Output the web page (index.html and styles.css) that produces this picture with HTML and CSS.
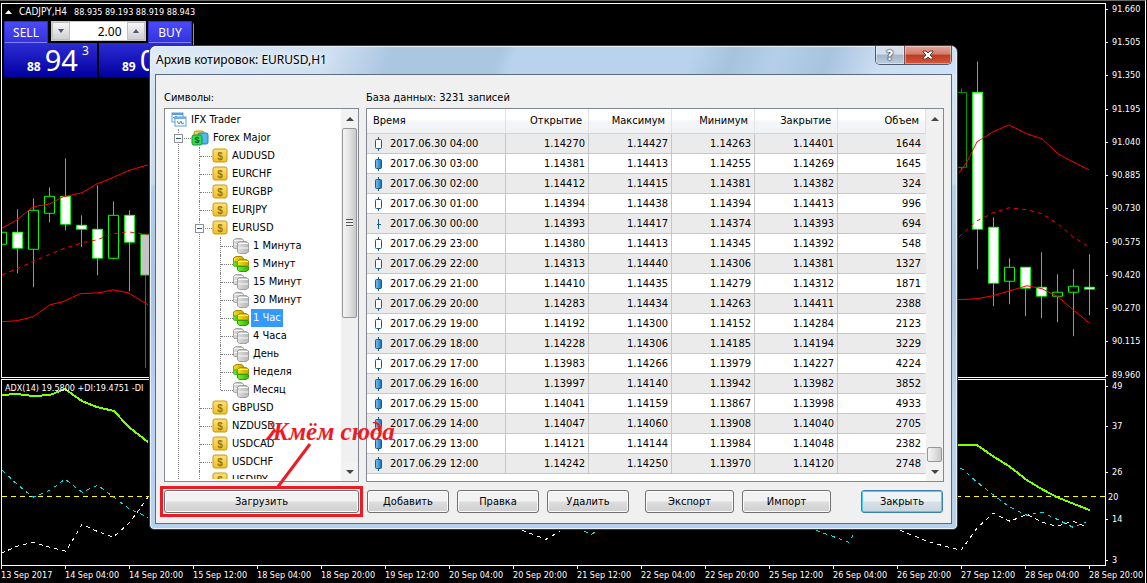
FILE: index.html
```html
<!DOCTYPE html>
<html lang="ru">
<head>
<meta charset="UTF-8">
<title>CADJPY,H4</title>
<link rel="stylesheet" href="styles.css">
</head>

<body>
<!--иконки-->
<svg class="sprite" width="0" height="0" aria-hidden="true">
  <defs>
    <linearGradient id="gGold" x1="0" y1="0" x2="0" y2="1"><stop offset="0" stop-color="#fbe27c"/><stop offset="1" stop-color="#f4bc22"/></linearGradient>
    <linearGradient id="gBlue" x1="0" y1="0" x2="1" y2="0"><stop offset="0" stop-color="#7cc4f4"/><stop offset="1" stop-color="#1470b4"/></linearGradient>
    <linearGradient id="gGray" x1="0" y1="0" x2="1" y2="0"><stop offset="0" stop-color="#dedede"/><stop offset="1" stop-color="#b8b8b8"/></linearGradient>
    <linearGradient id="gYell" x1="0" y1="0" x2="1" y2="0"><stop offset="0" stop-color="#f4e020"/><stop offset="1" stop-color="#c8a400"/></linearGradient>
    <linearGradient id="gGreen" x1="0" y1="0" x2="1" y2="0"><stop offset="0" stop-color="#70f430"/><stop offset="1" stop-color="#38b400"/></linearGradient>
  </defs>
  <symbol id="i-root" viewBox="0 0 16 16">
    <rect x="1" y="1" width="11" height="9" fill="#fff" stroke="#5b9fd8"/><path d="M1 2h11" stroke="#5b9fd8" stroke-width="2"/>
    <path d="M2 6l1-1 1 2 1-3 1 2" fill="none" stroke="#4a86c8"/>
    <rect x="4" y="5" width="11" height="9" fill="#fff" stroke="#5b9fd8"/><path d="M4 6h11" stroke="#6cb0e8" stroke-width="2"/>
    <path d="M6 9l2 3 2-3 1 3 2-1" fill="none" stroke="#4a86c8"/>
  </symbol>
  <symbol id="i-group" viewBox="0 0 18 16">
    <rect x="3" y="1" width="10" height="8" rx="2" fill="#f3cf45" stroke="#b8960c"/>
    <rect x="7" y="3" width="10" height="11" rx="2" fill="#52b8f0" stroke="#1c80b8"/>
    <rect x="1" y="5" width="10" height="10" rx="2" fill="#30dc58" stroke="#0c9a30"/>
    <text x="6" y="13" class="coin coin-green">$</text>
  </symbol>
  <symbol id="i-coin" viewBox="0 0 16 16">
    <rect x="1" y="1" width="14" height="13" rx="2" fill="url(#gGold)" stroke="#c8980c"/>
    <text x="8" y="12" class="coin">$</text>
  </symbol>
  <symbol id="i-base" viewBox="0 0 16 16">
    <path d="M.5 2L3 .5h5.500L10.500 2v8.500H2L.5 10z" fill="url(#gGray)" stroke="#a6a6a6"/><path d="M1 2.500h9M1 6.500h4" stroke="#f4f4f4"/>
    <path d="M4.500 5L7 3.500h6L15.500 5v9L13 15.500H6.500L4.500 14z" fill="url(#gGray)" stroke="#a0a0a0"/><path d="M5 5.500h10M5 10h10" stroke="#fafafa"/>
  </symbol>
  <symbol id="i-base-on" viewBox="0 0 16 16">
    <path d="M.5 2L3 .5h5.500L10.500 2v4H.5z" fill="url(#gYell)" stroke="#a48c00"/><path d="M.5 6h5v4.500H2L.5 10z" fill="url(#gGreen)" stroke="#58c030"/>
    <path d="M4.500 5L7 3.500h6L15.500 5v5h-11z" fill="url(#gYell)" stroke="#a48c00"/><path d="M4.500 10.500h11V14L13 15.500H6.500L4.500 14z" fill="url(#gGreen)" stroke="#349800"/>
    <path d="M5 5.500h10" stroke="#fff08a"/>
  </symbol>
  <symbol id="i-up" viewBox="0 0 8 14"><path d="M4.500 0v14" stroke="#1a5a86"/><rect x="1.500" y="2.500" width="6" height="9" rx="1" fill="#fff" stroke="#1a5a86"/></symbol>
  <symbol id="i-down" viewBox="0 0 8 14"><path d="M4.500 0v14" stroke="#1a5a86"/><rect x="1.500" y="2.500" width="6" height="9" rx="1" fill="url(#gBlue)" stroke="#1a5a86"/></symbol>
  <symbol id="i-flat" viewBox="0 0 8 14"><path d="M4.500 2v10M3 7.500h4" stroke="#1a5a86"/></symbol>
</svg>

<div class="terminal">
  <!--график цены-->
  <div class="pane pane-price">
    <svg class="plot" viewBox="2 4 1103 373" preserveAspectRatio="none" aria-hidden="true">
      <g transform="translate(.5 .5)" shape-rendering="crispEdges">
        <path class="wick" d="M1 213V261M17 209V273M33 198V287M49 187V222M65 158V230M81 215V247M97 185V275M113 201V259M129 210V291M193 23V60M977 61V269M993 217V306M1009 258V304M1025 267V316M1041 252V318M1057 274V322M1073 269V336M1089 254V315"/>
        <path class="wick dim" d="M145 234V368M961 88V170"/>
        <path class="bear" d="M12 232h10v16h-10zM60 196h10v28h-10zM76 225h10v4h-10zM92 229h10v29h-10zM124 215h10v27h-10zM972 92h10v137h-10zM988 227h10v56h-10zM1020 267h10v21h-10zM1036 287h10v9h-10zM1084 287h10v2h-10z"/>
        <path class="bear dim" d="M140 234h10v41h-10z"/>
        <path class="bull" d="M-4 232h10v12h-10zM28 210h10v39h-10zM44 196h10v17h-10zM108 215h10v43h-10zM1004 267h10v14h-10zM1052 292h10v4h-10zM1068 286h10v6h-10z"/>
        <path class="bull dim" d="M956 92h10v75h-10z"/>
      </g>
      <path class="band" d="M1 229L17 220L33 207L50 204L63 197L82 193L97 184L110 179L128 171L148 165M959 173L967 162L977 142L993 132L1009 125L1027 134L1042 139L1058 154L1073 162L1089 170"/>
      <path class="band" d="M1 322L17 321L33 317L50 305L63 302L80 294L100 293L113 290L128 293L148 305M958 300L977 299L993 296L1010 291L1027 286L1042 289L1058 297L1073 310L1089 323"/>
      <path class="band mid" d="M2 275L17 269L37 260L63 249L82 243L97 240L113 234L128 232L148 235M959 237L977 221L993 213L1009 208L1027 210L1042 214L1058 224L1073 237L1089 247"/>
    </svg>
    <p class="pane-title"><svg class="tri" viewBox="0 0 7 4" aria-hidden="true"><path d="M0 4L3.500 0L7 4z" fill="#fff"/></svg><span class="pair">CADJPY,H4</span><span>88.935 89.193 88.919 88.943</span></p>
    <div class="oneclick">
      <div class="oneclick-top">
        <button class="side" type="button">SELL</button>
        <div class="lots">
          <button type="button" aria-label="Меньше"><svg viewBox="0 0 6 4"><path d="M0 0h6L3 4z" fill="#46587c"/></svg></button>
          <input type="text" value="2.00" aria-label="Объем">
          <button type="button" aria-label="Больше"><svg viewBox="0 0 6 4"><path d="M0 4h6L3 0z" fill="#46587c"/></svg></button>
        </div>
        <button class="side" type="button">BUY</button>
      </div>
      <div class="quotes">
        <div class="quote"><b>88</b><strong>94</strong><sup>3</sup></div>
        <div class="quote"><b>89</b><strong>0</strong></div>
      </div>
    </div>
  </div>
  <ul class="scale scale-price">
    <li>91.660</li><li>91.505</li><li>91.350</li><li>91.195</li><li>91.040</li><li>90.885</li><li>90.730</li><li>90.575</li><li>90.420</li><li>90.270</li><li>90.115</li><li>89.960</li>
  </ul>

  <!--индикатор ADX-->
  <div class="pane pane-adx">
    <svg class="plot" viewBox="2 380 1103 185" preserveAspectRatio="none" aria-hidden="true">
      <path class="level" d="M2 496.500H1105"/>
      <path class="di plus" d="M2 470L17 484L33 497L50 490L65 479L82 492L98 485L115 498L130 509L148 517M584 531L592 534L597 530M816 530L849 542L855 531M960 468L964 470L977 482L995 496L1010 507L1027 515L1042 512L1057 519L1073 527L1086 522"/>
      <path class="di minus" d="M1 553L17 546L33 542L50 547L66 551L82 524L97 531L113 537L130 522L148 497M522 530L546 539L560 531M900 530L930 542L961 550L977 528L993 513L1010 521L1027 514L1042 522L1057 526L1073 521L1087 527"/>
      <path class="adx" d="M1 395L17 394L33 396L50 395L65 389L82 401L97 407L114 411L129 427L148 442M958 445L977 445L993 456L1009 466L1027 480L1042 489L1057 497L1072 503L1090 510"/>
    </svg>
    <p class="pane-title">ADX(14) 19.5800 +DI:19.4751 -DI</p>
  </div>
  <ul class="scale scale-adx">
    <li>49</li><li>37</li><li>26</li><li class="on-level">20</li><li>14</li><li>3</li>
  </ul>

  <ul class="times">
    <li>13 Sep 2017</li><li>14 Sep 04:00</li><li>14 Sep 20:00</li><li>15 Sep 12:00</li><li>18 Sep 04:00</li><li>18 Sep 20:00</li><li>19 Sep 12:00</li><li>20 Sep 04:00</li><li>20 Sep 20:00</li><li>21 Sep 12:00</li><li>22 Sep 04:00</li><li>22 Sep 20:00</li><li>25 Sep 12:00</li><li>26 Sep 04:00</li><li>26 Sep 20:00</li><li>27 Sep 12:00</li><li>28 Sep 04:00</li><li>28 Sep 20:00</li>
  </ul>
</div>

<!--окно архива-->
<div class="dialog" role="dialog" aria-labelledby="dlgTitle">
  <div class="titlebar">
    <h1 id="dlgTitle">Архив котировок: EURUSD,H1</h1>
    <div class="winbtns">
      <button class="help" type="button" aria-label="Справка">?</button>
      <button class="close" type="button" aria-label="Закрыть окно"><svg viewBox="0 0 12 10"><path d="M1 1h3l2 2 2-2h3v1L8 5l3 3v1H8L6 7 4 9H1V8l3-3-3-3z" fill="#fff" stroke="#5c3a3a"/></svg></button>
    </div>
  </div>
  <div class="content">
    <div class="cols">
      <div class="col-tree">
        <h2>Символы:</h2>
        <div class="box">
          <div class="tree">
            <div class="row root"><svg class="ico"><use href="#i-root"/></svg><span>IFX Trader</span></div>
            <ul>
              <li><div class="row"><i class="exp"></i><svg class="ico wide"><use href="#i-group"/></svg><span>Forex Major</span></div>
                <ul>
                  <li><div class="row"><svg class="ico"><use href="#i-coin"/></svg><span>AUDUSD</span></div></li>
                  <li><div class="row"><svg class="ico"><use href="#i-coin"/></svg><span>EURCHF</span></div></li>
                  <li><div class="row"><svg class="ico"><use href="#i-coin"/></svg><span>EURGBP</span></div></li>
                  <li><div class="row"><svg class="ico"><use href="#i-coin"/></svg><span>EURJPY</span></div></li>
                  <li><div class="row"><i class="exp"></i><svg class="ico"><use href="#i-coin"/></svg><span>EURUSD</span></div>
                    <ul>
                      <li><div class="row"><svg class="ico"><use href="#i-base"/></svg><span>1 Минута</span></div></li>
                      <li><div class="row"><svg class="ico"><use href="#i-base-on"/></svg><span>5 Минут</span></div></li>
                      <li><div class="row"><svg class="ico"><use href="#i-base"/></svg><span>15 Минут</span></div></li>
                      <li><div class="row"><svg class="ico"><use href="#i-base"/></svg><span>30 Минут</span></div></li>
                      <li><div class="row"><svg class="ico"><use href="#i-base-on"/></svg><span class="sel">1 Час</span></div></li>
                      <li><div class="row"><svg class="ico"><use href="#i-base"/></svg><span>4 Часа</span></div></li>
                      <li><div class="row"><svg class="ico"><use href="#i-base"/></svg><span>День</span></div></li>
                      <li><div class="row"><svg class="ico"><use href="#i-base-on"/></svg><span>Неделя</span></div></li>
                      <li class="last"><div class="row"><svg class="ico"><use href="#i-base"/></svg><span>Месяц</span></div></li>
                    </ul>
                  </li>
                  <li><div class="row"><svg class="ico"><use href="#i-coin"/></svg><span>GBPUSD</span></div></li>
                  <li><div class="row"><svg class="ico"><use href="#i-coin"/></svg><span>NZDUSD</span></div></li>
                  <li><div class="row"><svg class="ico"><use href="#i-coin"/></svg><span>USDCAD</span></div></li>
                  <li><div class="row"><svg class="ico"><use href="#i-coin"/></svg><span>USDCHF</span></div></li>
                  <li><div class="row"><svg class="ico"><use href="#i-coin"/></svg><span>USDJPY</span></div></li>
                </ul>
              </li>
            </ul>
          </div>
          <div class="scroll scroll-tree">
            <button type="button" aria-label="Вверх"><svg viewBox="0 0 8 4"><path d="M0 4L4 0L8 4z"/></svg></button>
            <div class="thumb"></div>
            <button class="dn" type="button" aria-label="Вниз"><svg viewBox="0 0 8 4"><path d="M0 0L4 4L8 0z"/></svg></button>
          </div>
        </div>
        <button class="btn" type="button">Загрузить</button>
      </div>

      <div class="col-data">
        <h2>База данных: 3231 записей</h2>
        <div class="box">
          <div class="data">
            <table>
              <thead>
                <tr><th class="time">Время</th><th>Открытие</th><th>Максимум</th><th>Минимум</th><th>Закрытие</th><th class="vol">Объем</th></tr>
              </thead>
              <tbody>
                <tr><td><svg class="bar"><use href="#i-up"/></svg>2017.06.30 04:00</td><td>1.14270</td><td>1.14427</td><td>1.14263</td><td>1.14401</td><td>1644</td></tr>
                <tr><td><svg class="bar"><use href="#i-down"/></svg>2017.06.30 03:00</td><td>1.14381</td><td>1.14413</td><td>1.14255</td><td>1.14269</td><td>1645</td></tr>
                <tr><td><svg class="bar"><use href="#i-down"/></svg>2017.06.30 02:00</td><td>1.14412</td><td>1.14415</td><td>1.14381</td><td>1.14382</td><td>324</td></tr>
                <tr><td><svg class="bar"><use href="#i-up"/></svg>2017.06.30 01:00</td><td>1.14394</td><td>1.14438</td><td>1.14394</td><td>1.14413</td><td>996</td></tr>
                <tr><td><svg class="bar"><use href="#i-flat"/></svg>2017.06.30 00:00</td><td>1.14393</td><td>1.14417</td><td>1.14374</td><td>1.14393</td><td>694</td></tr>
                <tr><td><svg class="bar"><use href="#i-up"/></svg>2017.06.29 23:00</td><td>1.14380</td><td>1.14413</td><td>1.14345</td><td>1.14392</td><td>548</td></tr>
                <tr><td><svg class="bar"><use href="#i-up"/></svg>2017.06.29 22:00</td><td>1.14313</td><td>1.14440</td><td>1.14306</td><td>1.14381</td><td>1327</td></tr>
                <tr><td><svg class="bar"><use href="#i-down"/></svg>2017.06.29 21:00</td><td>1.14410</td><td>1.14435</td><td>1.14279</td><td>1.14312</td><td>1871</td></tr>
                <tr><td><svg class="bar"><use href="#i-up"/></svg>2017.06.29 20:00</td><td>1.14283</td><td>1.14434</td><td>1.14263</td><td>1.14411</td><td>2388</td></tr>
                <tr><td><svg class="bar"><use href="#i-up"/></svg>2017.06.29 19:00</td><td>1.14192</td><td>1.14300</td><td>1.14152</td><td>1.14284</td><td>2123</td></tr>
                <tr><td><svg class="bar"><use href="#i-down"/></svg>2017.06.29 18:00</td><td>1.14228</td><td>1.14306</td><td>1.14185</td><td>1.14194</td><td>3229</td></tr>
                <tr><td><svg class="bar"><use href="#i-up"/></svg>2017.06.29 17:00</td><td>1.13983</td><td>1.14266</td><td>1.13979</td><td>1.14227</td><td>4224</td></tr>
                <tr><td><svg class="bar"><use href="#i-down"/></svg>2017.06.29 16:00</td><td>1.13997</td><td>1.14140</td><td>1.13942</td><td>1.13982</td><td>3852</td></tr>
                <tr><td><svg class="bar"><use href="#i-down"/></svg>2017.06.29 15:00</td><td>1.14041</td><td>1.14159</td><td>1.13867</td><td>1.13998</td><td>4933</td></tr>
                <tr><td><svg class="bar"><use href="#i-down"/></svg>2017.06.29 14:00</td><td>1.14047</td><td>1.14060</td><td>1.13908</td><td>1.14040</td><td>2705</td></tr>
                <tr><td><svg class="bar"><use href="#i-down"/></svg>2017.06.29 13:00</td><td>1.14121</td><td>1.14144</td><td>1.13984</td><td>1.14048</td><td>2382</td></tr>
                <tr><td><svg class="bar"><use href="#i-down"/></svg>2017.06.29 12:00</td><td>1.14242</td><td>1.14250</td><td>1.13970</td><td>1.14120</td><td>2748</td></tr>
              </tbody>
            </table>
          </div>
          <div class="scroll scroll-data">
            <button type="button" aria-label="Вверх"><svg viewBox="0 0 8 4"><path d="M0 4L4 0L8 4z"/></svg></button>
            <div class="thumb"></div>
            <button class="dn" type="button" aria-label="Вниз"><svg viewBox="0 0 8 4"><path d="M0 0L4 4L8 0z"/></svg></button>
          </div>
        </div>
        <div class="actions">
          <button class="btn" type="button">Добавить</button>
          <button class="btn" type="button">Правка</button>
          <button class="btn" type="button">Удалить</button>
          <button class="btn long first" type="button">Экспорт</button>
          <button class="btn long" type="button">Импорт</button>
          <button class="btn default" type="button">Закрыть</button>
        </div>
      </div>
    </div>
  </div>

  <!--подсказка, какую кнопку нажать-->
  <svg class="mark" viewBox="0 0 204 76" aria-hidden="true"><rect x="1.500" y="45.500" width="200" height="28" fill="none" stroke="#ed1c24" stroke-width="3"/><path d="M150 2L117 46" stroke="#ed1c24" stroke-width="3"/></svg>
  <p class="mark-text">Жмём сюда</p>
</div>
</body>
</html>
```
FILE: styles.css
```css
html,body{ height:100%; margin:0; padding:0;}
body{ background:#000; overflow:hidden; font:11px/14px "DejaVu Sans Condensed","DejaVu Sans",sans-serif; color:#000;}
ul,p,h1,h2{ margin:0; padding:0; list-style:none; font-size:inherit; font-weight:normal;}
button,input{ margin:0; padding:0; font:inherit; box-sizing:border-box;}
button{ cursor:default;}
.sprite{ position:absolute;}

/* терминал */
.terminal{ box-sizing:border-box; height:100vh; margin-right:1px; border-top:1px solid #6a6a64; padding:2px 0 0 1px; display:grid; grid-template-columns:minmax(0,1fr) 39px; grid-template-rows:375fr 187fr 17px; border-right:1px solid #fff; color:#fff; font-size:9px; line-height:12px;}
.pane{ position:relative; border:1px solid #fff; overflow:hidden;}
.pane-price{ margin-bottom:1px;}
.plot{ display:block; position:absolute; top:0; left:0; width:100%; height:100%; shape-rendering:crispEdges;}
.pane-title{ position:relative; display:flex; gap:7px; padding:2px 3px; white-space:pre;}
.pair{ font-size:10px;}
.tri{ width:7px; height:4px; align-self:center;}
.wick{ stroke:#0f0; fill:none;}
.bear{ stroke:#0f0; fill:#fff;}
.bull{ stroke:#0f0; fill:#000;}
.wick.dim,.bull.dim{ stroke:#009c00;}
.bear.dim{ stroke:#00a800; fill:#c4c4c4;}
.band{ stroke:#f00; fill:none;}
.mid{ stroke-dasharray:4 4;}
.level{ stroke:#ff0; stroke-dasharray:5 4;}
.di{ fill:none; stroke-dasharray:4 4;}
.plus{ stroke:#00e5e5;}
.minus{ stroke:#fff;}
.adx{ fill:none; stroke:#7fff00; stroke-width:2;}

.scale li{ position:relative; padding-left:6px; line-height:12px;}
.scale li:before{ content:""; position:absolute; left:0; top:6px; width:2px; height:1px; background:#fff;}
.scale-price{ display:flex; flex-direction:column; justify-content:space-between; margin-bottom:-2px;}
.scale-adx{ display:grid; grid-template-rows:13fr 40fr 46fr 24fr 22fr 41fr; align-items:end;}
.scale-adx .on-level{ padding-left:2px;}
.scale-adx .on-level:before{ display:none;}
.times{ grid-column:1 / 3; display:flex; overflow:hidden;}
.times li{ flex:0 0 64px; position:relative; padding-top:3px; white-space:nowrap;}
.times li:before{ content:""; position:absolute; left:0; top:0; width:1px; height:3px; background:#fff;}

/* торговля в один клик */
.oneclick{ position:absolute; left:2px; top:17px; width:188px; font-family:"Noto Sans",sans-serif;}
.oneclick-top{ display:flex; justify-content:space-between;}
.side{ width:44px; height:22px; border:1px solid #2c2cd0; border-bottom:0; background:linear-gradient(#4a4af8,#3232dc); color:#fff; font-size:12px; line-height:18px; box-shadow:inset 0 -1px #8080ff;}
.lots{ display:flex; width:95px; height:20px; box-sizing:border-box; border:1px solid #c8c8c8; background:#fff;}
.lots button{ width:18px; border:1px solid #c0c0c0; background:linear-gradient(#f6f6f6,#d0d0d0);}
.lots svg{ display:block; width:6px; height:4px; margin:0 auto;}
.lots input{ flex:1; min-width:0; border:0; padding-right:5px; text-align:right; font-size:12px;}
.quotes{ display:flex; gap:2px;}
.quote{ box-sizing:border-box; width:93px; height:34px; padding-left:23px; display:flex; align-items:flex-end; gap:4px; background:linear-gradient(#2c2cd4,#0000a0); overflow:hidden;}
.quote b{ font-size:12px; line-height:20px;}
.quote strong{ font-size:29px; line-height:34px; font-weight:normal;}
.quote sup{ font-size:12px; line-height:16px; align-self:flex-start;}

/* окно */
.dialog{ position:absolute; left:149px; top:45px; width:809px; box-sizing:border-box; border:1px solid #2e3b4a; border-radius:7px 7px 5px 5px; padding:0 5px 5px; background:linear-gradient(#dce9f6,#c6daee 138px,#b2cfec 140px,#a8c4e2 240px,#b9d4f0 360px,#b6d1ed); box-shadow:inset 0 0 0 1px #e6f1fb;}
.titlebar{ display:flex; justify-content:space-between; height:28px; margin:0 -4px; padding:0 4px 0 5px; background:linear-gradient(110deg,#dde9f5 0,#cfe0f1 170px,#abc6e1 230px,#abc6e1 330px,#b9d3ed 345px,#b9d3ed 510px,#a6c2dd 550px,#b5cfe9 590px,#a8c3de 640px,#cbdef2 690px,#cfe1f4); border-radius:6px 6px 0 0; box-shadow:inset 0 1px #e6f1fb;}
.titlebar h1{ font:12px/28px "Noto Sans","DejaVu Sans",sans-serif; text-shadow:0 0 6px #fff,0 0 10px #fff;}
.winbtns{ display:flex; height:18px; border:1px solid #4c5a6c; border-top:0; border-radius:0 0 5px 5px; overflow:hidden;}
.winbtns button{ border:0; box-shadow:inset 0 0 0 1px rgba(255,255,255,.4);}
.help{ width:28px; background:linear-gradient(#d4dfeb 45%,#a4b6ca 50%,#bccddf); color:#fff; font-size:14px; font-weight:bold; text-shadow:0 0 1px #222c44,0 0 1px #222c44,0 0 2px #222c44;}
.winbtns .close{ width:47px; border-left:1px solid #7c4c4c; background:linear-gradient(#e4a294 0,#d08070 45%,#c03a20 50%,#d4583c);}
.close svg{ display:block; width:12px; height:10px; margin:0 auto;}
.content{ border:1px solid #5c6c80; background:#f0f0f0; padding:16px 7px 10px 8px;}
.cols{ display:flex; gap:7px;}
.col-tree{ width:195px;}
.col-data{ flex:1; min-width:0;}
.col-data h2,.col-tree h2{ margin-bottom:3px;}
.box{ display:flex; box-sizing:border-box; height:374px; border:1px solid #828790; background:#fff; margin-bottom:8px;}

/* дерево символов */
.tree{ flex:1; overflow:hidden; padding:2px 0 0; height:370px; box-sizing:border-box;}
.tree .row{ position:relative; display:flex; align-items:center; height:18px; white-space:nowrap;}
.tree .root{ padding-left:6px;}
.tree ul{ margin-left:13px;}
.tree ul ul{ margin-left:20px;}
.tree li{ border-left:1px dotted #808080;}
.tree li .row:before{ content:""; width:12px; border-top:1px dotted #808080;}
.tree .last{ border-left-color:transparent;}
.tree .last .row:after{ content:""; position:absolute; left:-1px; top:0; height:9px; border-left:1px dotted #808080;}
.row span{ margin-left:2px; padding:0 2px; line-height:18px;}
.row .sel{ background:#39f; color:#fff;}
.ico{ width:16px; height:16px; shape-rendering:auto;}
.ico.wide{ width:18px;}
.exp{ position:absolute; left:-5px; top:5px; width:7px; height:7px; border:1px solid #919191; background:#fff;}
.exp:before{ content:""; position:absolute; left:1px; top:3px; width:5px; height:1px; background:#2a4fa0;}
.coin{ font:bold 10px "Liberation Sans",sans-serif; fill:#9a7408; text-anchor:middle;}
.coin-green{ fill:#065c18; font-size:9px;}

/* полосы прокрутки */
.scroll{ width:17px; display:flex; flex-direction:column; background:#f0f0f0;}
.scroll button{ height:19px; border:0; background:#f2f2f2;}
.scroll svg{ display:block; width:8px; height:4px; margin:0 auto; fill:#444;}
.scroll .dn{ margin-top:auto;}
.thumb{ box-sizing:border-box; width:15px; margin-left:1px; border:1px solid #979797; border-radius:2px; background:linear-gradient(90deg,#f4f4f4,#e2e2e2 50%,#c8c8c8);}
.scroll-tree .thumb{ height:190px; display:flex; align-items:center; justify-content:center;}
.scroll-tree .thumb:before{ content:""; width:7px; height:8px; background:repeating-linear-gradient(#555 0,#555 1px,#eee 1px,#eee 3px);}
.scroll-data .thumb{ height:15px; margin-top:auto;}
.scroll-data .dn{ margin-top:0;}

/* таблица котировок */
.data{ flex:1; min-width:0; overflow:hidden;}
.data table{ width:100%; table-layout:fixed; border-collapse:separate; border-spacing:0;}
.data th{ height:25px; box-sizing:border-box; padding:0 6px 0 0; text-align:right; font-weight:normal; background:linear-gradient(#fff 45%,#f5f6f8 50%,#f1f2f4); border-right:1px solid #dfe2e6; border-bottom:1px solid #d0d3d8;}
.data .time{ width:139px; text-align:left; padding-left:6px;}
.data .vol{ width:88px;}
.data td{ height:20px; box-sizing:border-box; padding:0 3px 0 0; text-align:right; border-right:1px solid #c6c6c6; border-bottom:1px solid #c6c6c6; white-space:nowrap;}
.data td:first-child{ text-align:left; padding-left:7px;}
.data td:last-child{ border-right-color:transparent; padding-right:4px;}
.data tr:nth-child(odd) td{ background:#ebebeb;}
.bar{ width:8px; height:14px; margin-right:8px; vertical-align:middle;}

/* кнопки */
.btn{ display:block; width:100%; height:23px; border:1px solid #707070; border-radius:3px; background:linear-gradient(#f2f2f2 48%,#dddddd 52%,#cfcfcf); box-shadow:inset 0 0 0 1px #fbfbfb;}
.actions{ display:flex; gap:8px; padding:0 1px;}
.actions .btn{ width:82px;}
.actions .long{ width:89px;}
.actions .first{ margin-left:8px;}
.actions .default{ margin-left:auto; border-color:#3c7fb1; background:linear-gradient(#eef3f6 48%,#d8e2e8 52%,#c8d6de); box-shadow:inset 0 0 0 1px #46d0f8;}

/* пометка */
.mark{ position:absolute; left:10px; top:396px; width:204px; height:76px; pointer-events:none;}
.mark-text{ position:absolute; left:116px; top:372px; font:italic bold 25px/28px "Liberation Serif",serif; color:#ed1c24; white-space:nowrap;}
```
